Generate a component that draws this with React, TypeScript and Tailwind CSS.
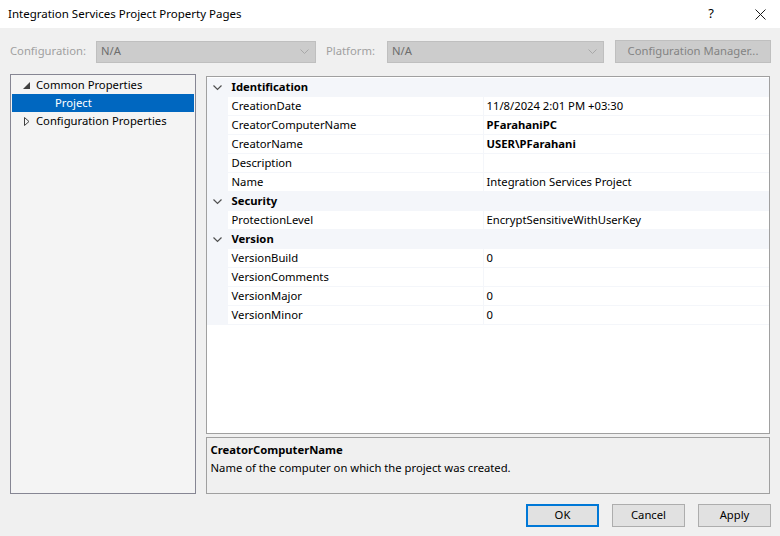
import React from 'react';

type Row = { name: string; value?: string; bold?: boolean };
type Category = { title: string; rows: Row[] };

const categories: Category[] = [
  {
    title: 'Identification',
    rows: [
      { name: 'CreationDate', value: '11/8/2024 2:01 PM +03:30' },
      { name: 'CreatorComputerName', value: 'PFarahaniPC', bold: true },
      { name: 'CreatorName', value: 'USER\\PFarahani', bold: true },
      { name: 'Description', value: '' },
      { name: 'Name', value: 'Integration Services Project' },
    ],
  },
  {
    title: 'Security',
    rows: [{ name: 'ProtectionLevel', value: 'EncryptSensitiveWithUserKey' }],
  },
  {
    title: 'Version',
    rows: [
      { name: 'VersionBuild', value: '0' },
      { name: 'VersionComments', value: '' },
      { name: 'VersionMajor', value: '0' },
      { name: 'VersionMinor', value: '0' },
    ],
  },
];

const Chevron = () => (
  <svg width="9" height="6" viewBox="0 0 9 6" className="text-[#505050]">
    <path d="M0.5 0.5 L4.5 4.5 L8.5 0.5" fill="none" stroke="currentColor" strokeWidth="1.2" />
  </svg>
);

const ComboBox = ({ width }: { width: string }) => (
  <div className={`${width} h-[22px] bg-[#cccccc] border border-[#bfbfbf] flex items-center justify-between pl-[4px] pr-[6px]`}>
    <span className="text-[#6d6d6d]">N/A</span>
    <svg width="9" height="5" viewBox="0 0 9 5" className="text-[#a8a8a8]">
      <path d="M0.5 0.5 L4.5 4.5 L8.5 0.5" fill="none" stroke="currentColor" strokeWidth="1" />
    </svg>
  </div>
);

const DialogButton = ({ label, primary }: { label: string; primary?: boolean }) => (
  <button
    className={`w-[73px] h-[23px] bg-[#e1e1e1] text-[#000] ${
      primary ? 'border-2 border-[#0078d7]' : 'border border-[#adadad]'
    }`}
  >
    {label}
  </button>
);

export default function App() {
  return (
    <div
      className="w-[780px] h-[536px] bg-[#f0f0f0] flex flex-col text-[11.25px] text-black overflow-hidden"
      style={{ fontFamily: '"Segoe UI", "Noto Sans", "Open Sans", sans-serif' }}
    >
      {/* title bar */}
      <div className="h-[28px] bg-white flex items-center pl-[8px] shrink-0 text-[11.5px]">
        <span className="flex-1">Integration Services Project Property Pages</span>
        <span className="w-[46px] text-center text-[13px]">?</span>
        <span className="w-[46px] flex justify-center pl-[6px]">
          <svg width="11" height="11" viewBox="0 0 11 11">
            <path d="M0.5 0.5 L10.5 10.5 M10.5 0.5 L0.5 10.5" stroke="#1a1a1a" strokeWidth="1" />
          </svg>
        </span>
      </div>

      {/* configuration row */}
      <div className="mt-[12px] h-[23px] flex items-center pl-[10px]">
        <span className="w-[86px] text-[#a0a0a0]">Configuration:</span>
        <ComboBox width="w-[220px]" />
        <span className="w-[71px] pl-[10px] text-[#a0a0a0]">Platform:</span>
        <ComboBox width="w-[217px]" />
        <div className="ml-[11px] w-[156px] h-[23px] bg-[#cccccc] border border-[#bfbfbf] flex items-center justify-center text-[#838383]">
          Configuration Manager...
        </div>
      </div>

      {/* main area */}
      <div className="mt-[11px] flex px-[10px] gap-[10px]">
        {/* tree */}
        <div className="w-[186px] h-[420px] bg-[#f4f4f4] border border-[#868693] pt-[1px] px-[1px]">
          <div className="h-[18px] flex items-center">
            <span className="w-[24px] flex justify-end pr-[6px]">
              <svg width="7" height="7" viewBox="0 0 7 7">
                <path d="M7 0 L7 7 L0 7 Z" fill="#404040" />
              </svg>
            </span>
            <span>Common Properties</span>
          </div>
          <div className="h-[18px] flex items-center bg-[#0067c0] text-white pl-[43px]">Project</div>
          <div className="h-[18px] flex items-center">
            <span className="w-[24px] flex justify-end pr-[6px]">
              <svg width="6" height="9" viewBox="0 0 6 9">
                <path d="M0.5 0.5 L5 4.5 L0.5 8.5 Z" fill="none" stroke="#404040" strokeWidth="1" />
              </svg>
            </span>
            <span>Configuration Properties</span>
          </div>
        </div>

        {/* right column */}
        <div className="w-[566px] flex flex-col mt-[2px]">
          <div className="h-[358px] bg-white border border-[#a0a0a0] pt-[1px]">
            {categories.map((cat) => (
              <div key={cat.title}>
                <div className="h-[19px] bg-[#f4f6fa] flex items-center">
                  <span className="w-[25px] flex justify-start pl-[6px]">
                    <Chevron />
                  </span>
                  <span className="font-bold">{cat.title}</span>
                </div>
                {cat.rows.map((r) => (
                  <div key={r.name} className="h-[19px] flex bg-[#f4f6fa]">
                    <div className="w-[21px]" />
                    <div className="w-[255px] h-[18px] bg-white flex items-center pl-[4px]">{r.name}</div>
                    <div className="w-[1px]" />
                    <div className={`flex-1 h-[18px] bg-white flex items-center pl-[3px] ${r.bold ? 'font-bold' : ''}`}>
                      {r.value}
                    </div>
                  </div>
                ))}
              </div>
            ))}
          </div>

          <div className="mt-[3px] h-[57px] border border-[#a0a0a0] bg-[#f0f0f0] px-[4px] pt-[3px] leading-[18px]">
            <div className="font-bold">CreatorComputerName</div>
            <div>Name of the computer on which the project was created.</div>
          </div>
        </div>
      </div>

      {/* buttons */}
      <div className="mt-[10px] flex justify-end gap-[13px] pr-[9px]">
        <DialogButton label="OK" primary />
        <DialogButton label="Cancel" />
        <DialogButton label="Apply" />
      </div>
    </div>
  );
}
